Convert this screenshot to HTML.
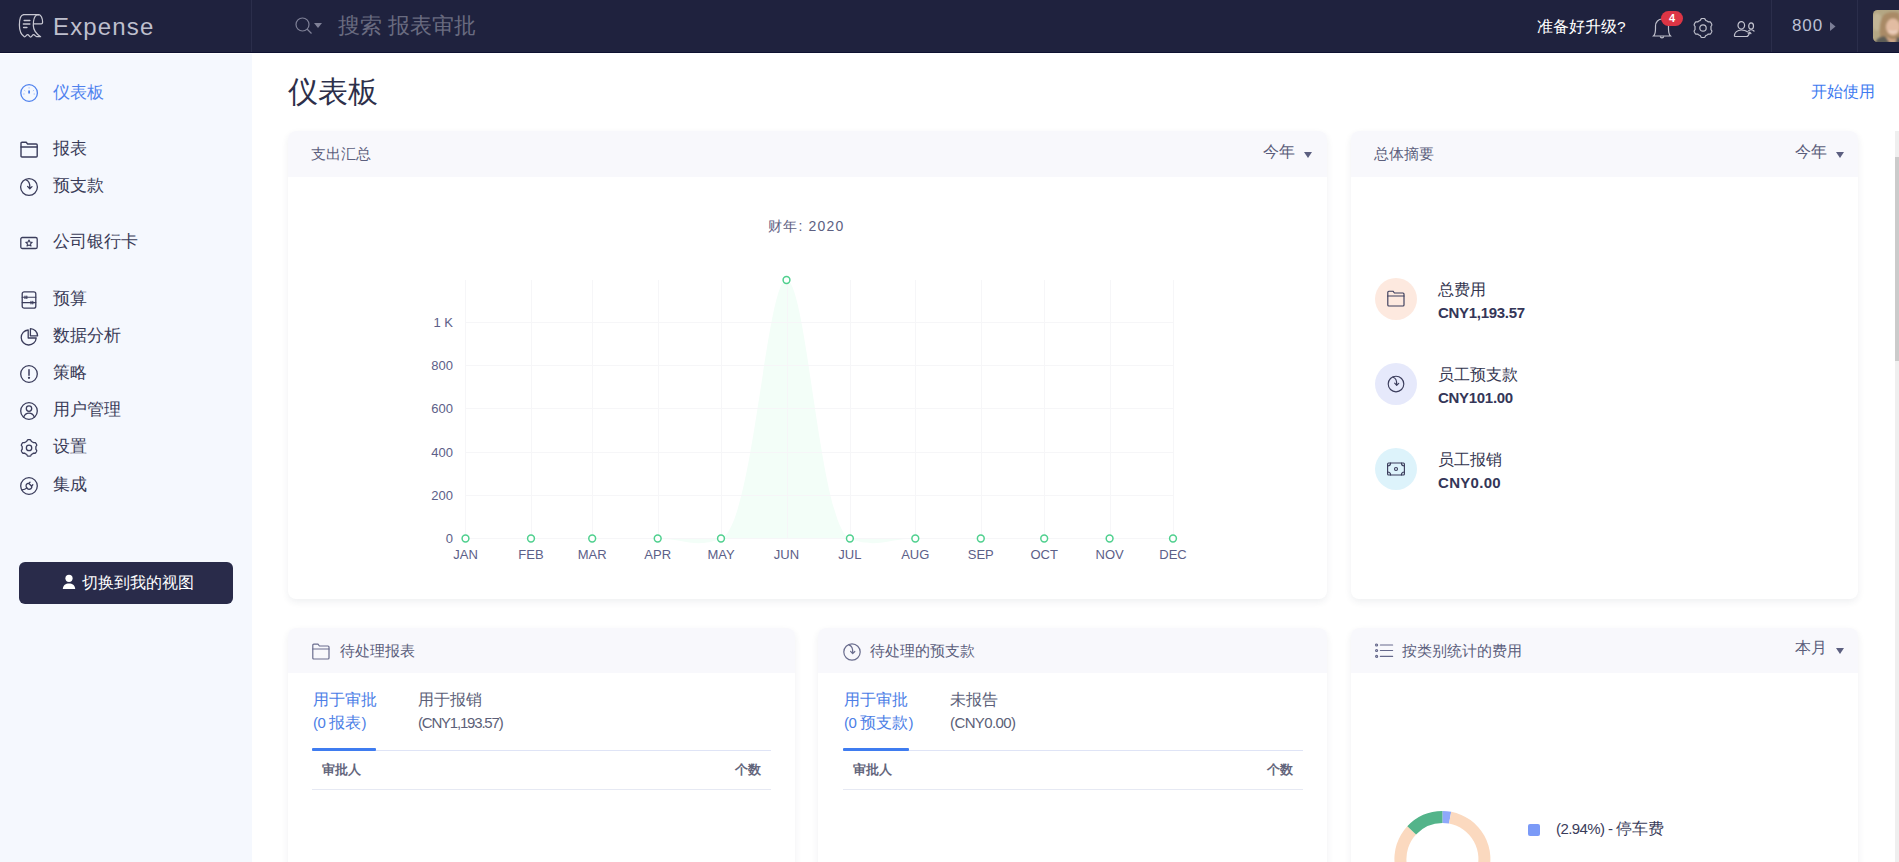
<!DOCTYPE html><html><head><meta charset="utf-8"><style>
*{box-sizing:border-box;margin:0;padding:0}
html,body{width:1899px;height:862px;overflow:hidden;background:#fff;font-family:"Liberation Sans",sans-serif;color:#2b2d42}
.a{position:absolute}
.t{position:absolute;white-space:nowrap}
.vd{position:absolute;top:0;width:1px;height:52px;background:#2b2e4b}
.nav{position:absolute;left:53px;font-size:17px;color:#3a3c58;line-height:20px;white-space:nowrap}
.card{position:absolute;background:#fff;border-radius:8px;box-shadow:0 3px 7px rgba(40,50,80,0.075)}
.ch{position:absolute;left:0;top:0;right:0;background:#f8f8fc;border-radius:8px 8px 0 0}
.ct{position:absolute;font-size:15px;color:#5c5f7d;line-height:18px;white-space:nowrap}
.dd{position:absolute;font-size:16px;color:#5a5d7a;line-height:18px;white-space:nowrap}
.tri{position:absolute;width:0;height:0;border-left:4px solid transparent;border-right:4px solid transparent;border-top:6px solid #5c5f80}
.ax{position:absolute;font-size:13px;color:#5c6088;line-height:14px;white-space:nowrap}
.tab1{position:absolute;font-size:15.5px;line-height:20px;color:#4c7ee6;white-space:nowrap}
.tab2{position:absolute;font-size:15.5px;line-height:20px;color:#5c5f78;white-space:nowrap}
.n{letter-spacing:-0.6px;font-size:15px}
.th{position:absolute;font-size:12.5px;font-weight:bold;color:#63657b;line-height:16px;white-space:nowrap}
</style></head><body>
<div class="a" style="left:0;top:0;width:1899px;height:52px;background:#1f223e"></div>
<div class="a" style="left:0;top:52px;width:1899px;height:1px;background:#0e1131"></div>
<svg class="a" style="left:0;top:0" width="50" height="50" viewBox="0 0 50 50" fill="none" stroke="#c8c8d2" stroke-width="1.25" stroke-linejoin="round" stroke-linecap="round">
<path d="M23.5 14.6 C21 14.9 19.4 18 19.4 24.9 C19.4 30 21 34.5 24.3 36.7 C25.6 37.3 26.4 34.6 27.6 34.6 C28.8 34.6 29.5 37 30.6 37 C31.7 37 32.4 34.6 33.6 34.6 C34.8 34.6 35.4 36.5 36.6 36.6 L40.6 36.7 C36 33.5 33.3 29.5 33.3 25.2 C33.3 20 34.2 16.4 36.6 15 C37.3 14.7 38 14.6 38.8 14.6 C41 14.7 42.6 18.5 42.6 22.2 C42.6 23.2 42.2 23.9 41.2 23.9 H33.6"/>
<path d="M23.5 14.6 H38.8"/>
<path d="M24.2 20.6 H29.8 M23.4 23.9 H29.8 M23.6 27.5 H26.9" stroke-width="1.5"/></svg>
<div class="t" style="left:53px;top:13px;font-size:24px;line-height:28px;color:#bebfcd;letter-spacing:1.15px">Expense</div>
<div class="vd" style="left:251px"></div>
<svg class="a" style="left:294px;top:16px" width="30" height="20" viewBox="0 0 30 20" fill="none" stroke="#7f8197" stroke-width="1.2">
<circle cx="8.5" cy="8.5" r="6.5"/><path d="M13 13 L17.5 17.5"/><path d="M20 7 H28 L24 12 Z" fill="#7f8197" stroke="none"/></svg>
<div class="t" style="left:338px;top:13px;font-size:22px;color:#696b80;line-height:26px">搜索 报表审批</div>
<div class="t" style="left:1537px;top:17px;font-size:15.5px;color:#fff;line-height:20px">准备好升级?</div>
<svg class="a" style="left:1651px;top:16px" width="23" height="23" viewBox="0 0 23 23" fill="none" stroke="#bfc0cc" stroke-width="1.2">
<path d="M2.5 20 C4 18.5 4.5 17 4.5 13 V10 C4.5 6 7.5 3 11 3 C14.5 3 17.5 6 17.5 10 V13 C17.5 17 18 18.5 19.5 20 Z"/><path d="M9.2 20.3 C9.6 22.3 12.4 22.3 12.8 20.3"/></svg>
<div class="a" style="left:1661px;top:11px;width:22px;height:15px;border-radius:8px;background:#dc3545;color:#fff;font-size:11px;font-weight:bold;text-align:center;line-height:15px">4</div>
<svg class="a" style="left:1692px;top:17px" width="22" height="22" viewBox="0 0 22 22" fill="none" stroke="#bfc0cc" stroke-width="1.2" stroke-linejoin="round"><path d="M11.00 1.50 L11.62 1.52 L12.24 1.60 L12.83 1.81 L13.26 2.55 L13.61 3.30 L14.07 3.59 L14.54 3.82 L15.00 4.07 L15.45 4.35 L15.88 4.64 L16.36 4.88 L17.19 4.81 L18.04 4.82 L18.52 5.23 L18.90 5.72 L19.23 6.25 L19.52 6.80 L19.76 7.37 L19.87 7.99 L19.45 8.74 L18.98 9.41 L18.95 9.95 L18.99 10.48 L19.00 11.00 L18.99 11.52 L18.95 12.05 L18.98 12.59 L19.45 13.26 L19.87 14.01 L19.76 14.63 L19.52 15.20 L19.23 15.75 L18.90 16.28 L18.52 16.77 L18.04 17.18 L17.19 17.19 L16.36 17.12 L15.88 17.36 L15.45 17.65 L15.00 17.93 L14.54 18.18 L14.07 18.41 L13.61 18.70 L13.26 19.45 L12.83 20.19 L12.24 20.40 L11.62 20.48 L11.00 20.50 L10.38 20.48 L9.76 20.40 L9.17 20.19 L8.74 19.45 L8.39 18.70 L7.93 18.41 L7.46 18.18 L7.00 17.93 L6.55 17.65 L6.12 17.36 L5.64 17.12 L4.81 17.19 L3.96 17.18 L3.48 16.77 L3.10 16.28 L2.77 15.75 L2.48 15.20 L2.24 14.63 L2.13 14.01 L2.55 13.26 L3.02 12.59 L3.05 12.05 L3.01 11.52 L3.00 11.00 L3.01 10.48 L3.05 9.95 L3.02 9.41 L2.55 8.74 L2.13 7.99 L2.24 7.37 L2.48 6.80 L2.77 6.25 L3.10 5.72 L3.48 5.23 L3.96 4.82 L4.81 4.81 L5.64 4.88 L6.12 4.64 L6.55 4.35 L7.00 4.07 L7.46 3.82 L7.93 3.59 L8.39 3.30 L8.74 2.55 L9.17 1.81 L9.76 1.60 L10.38 1.52Z"/><circle cx="11" cy="11" r="3.2"/></svg>
<svg class="a" style="left:1733px;top:20px" width="23" height="19" viewBox="0 0 23 19" fill="none" stroke="#c3c4cf" stroke-width="1.2" stroke-linecap="round" stroke-linejoin="round">
<ellipse cx="8.3" cy="5.35" rx="3.3" ry="3.7"/><path d="M14.4 11.8 C13 10.6 11 10 8.3 10 C4.3 10 1.6 12.6 1.4 15.4 C1.3 16.1 1.8 16.5 2.6 16.5 H13.5 C14.8 16.5 15.8 15.4 16.5 12.8"/><path d="M15.2 13.4 L16.6 12.1 L17.9 13.5"/>
<ellipse cx="18.1" cy="6" rx="2.4" ry="3.1"/><path d="M15.4 10.9 C16.8 9.7 19.5 9.7 21 11"/></svg>
<div class="vd" style="left:1771px"></div>
<div class="t" style="left:1792px;top:16px;font-size:17px;color:#bcc0d4;line-height:20px;letter-spacing:0.9px">800</div>
<svg class="a" style="left:1830px;top:22px" width="6" height="9"><path d="M0 0 L5.5 4.5 L0 9 Z" fill="#7b7e96"/></svg>
<div class="vd" style="left:1857px"></div>
<svg class="a" style="left:1873px;top:10px" width="26" height="32" viewBox="0 0 26 32">
<defs><clipPath id="av"><rect x="0" y="0" width="34" height="32" rx="4.5"/></clipPath><filter id="bl"><feGaussianBlur stdDeviation="0.8"/></filter></defs>
<g clip-path="url(#av)"><rect width="34" height="32" fill="#b4a784"/>
<g filter="url(#bl)">
<ellipse cx="4" cy="12" rx="5" ry="9" fill="#c2b596"/>
<path d="M8 30 C6 22 6 12 10 6 C13 2 20 1 26 3 L30 30 Z" fill="#a98a66"/>
<ellipse cx="20" cy="17" rx="7" ry="8.5" fill="#e2bca2"/>
<path d="M14 27 C17 30 22 30 26 28 L26 32 L14 32 Z" fill="#d3a98a"/>
<path d="M2 34 C3 29 6 27 11 26 C14 28 16 32 18 34 Z" fill="#5d5d57"/>
<path d="M24 27 C26 27 28 28 30 30 L30 34 L22 34 Z" fill="#5d5d57"/>
<path d="M16 21 C18 22.5 22 22.5 24 21" stroke="#fff" stroke-width="1" fill="none" opacity="0.7"/>
</g></g></svg>
<div class="a" style="left:0;top:54px;width:252px;height:808px;background:#f5f8fe"></div>
<svg class="a" style="left:19px;top:83px" width="20" height="20" viewBox="0 0 20 20" fill="none" stroke="#4f82ee" stroke-width="1.3" stroke-linejoin="round" stroke-linecap="round"><circle cx="10.1" cy="10" r="8.3"/><path d="M10.1 7.4 V10.4" stroke-width="1.8" stroke-linecap="butt"/><path d="M10.1 4.6 V5.1 M5.6 7.5 L6 7.8 M14.6 7.5 L14.2 7.8 M4.6 11 H5.2 M15 11 H15.6" stroke-width="0.9" opacity="0.55"/></svg>
<div class="nav" style="top:83px;color:#4f82ee">仪表板</div>
<svg class="a" style="left:19px;top:140px" width="20" height="18" viewBox="0 0 20 18" fill="none" stroke="#3b3d5c" stroke-width="1.4" stroke-linejoin="round" stroke-linecap="round"><path d="M2 3.2 C2 2.6 2.4 2.2 3 2.2 H7.2 L8.6 4 H17.2 C17.8 4 18.2 4.4 18.2 5 V16 C18.2 16.6 17.8 17 17.2 17 H3 C2.4 17 2 16.6 2 16 Z"/><path d="M2 7 H18.2"/></svg>
<div class="nav" style="top:139px">报表</div>
<svg class="a" style="left:19px;top:177px" width="20" height="20" viewBox="0 0 20 20" fill="none" stroke="#3b3d5c" stroke-width="1.3" stroke-linejoin="round" stroke-linecap="round"><circle cx="10" cy="10" r="8.4"/><path d="M6.6 2.6 C9.6 3.4 11.2 6.4 10.8 11.6 M8.6 9.4 L10.8 11.8 L13 9.6"/></svg>
<div class="nav" style="top:176px">预支款</div>
<svg class="a" style="left:19px;top:235px" width="20" height="16" viewBox="0 0 20 16" fill="none" stroke="#3b3d5c" stroke-width="1.3" stroke-linejoin="round" stroke-linecap="round"><rect x="1.8" y="2.5" width="16.4" height="11" rx="1.6"/><path d="M10 5 L11 7.1 L13.2 7.3 L11.5 8.8 L12 11 L10 9.9 L8 11 L8.5 8.8 L6.8 7.3 L9 7.1 Z" stroke-width="1.1"/></svg>
<div class="nav" style="top:232px">公司银行卡</div>
<svg class="a" style="left:19px;top:290px" width="20" height="20" viewBox="0 0 20 20" fill="none" stroke="#3b3d5c" stroke-width="1.3" stroke-linejoin="round" stroke-linecap="round"><rect x="3.2" y="1.8" width="13.6" height="16.4" rx="2"/><path d="M3.2 7.2 H16.8 M3.2 12.6 H16.8" stroke-width="1.1"/><path d="M6 6 V8.4 M7.8 6 V8.4 M12 11.4 V13.8 M13.8 11.4 V13.8" stroke-width="1.2"/></svg>
<div class="nav" style="top:289px">预算</div>
<svg class="a" style="left:19px;top:327px" width="20" height="20" viewBox="0 0 20 20" fill="none" stroke="#3b3d5c" stroke-width="1.3" stroke-linejoin="round" stroke-linecap="round"><path d="M9.2 3 A7.5 7.5 0 1 0 17.2 11 H9.2 Z"/><path d="M11.4 1.6 A7.5 7.5 0 0 1 18.6 8.8 H11.4 Z"/></svg>
<div class="nav" style="top:326px">数据分析</div>
<svg class="a" style="left:19px;top:364px" width="20" height="20" viewBox="0 0 20 20" fill="none" stroke="#3b3d5c" stroke-width="1.3" stroke-linejoin="round" stroke-linecap="round"><circle cx="10" cy="10" r="8.3"/><path d="M10 5.8 V11.3" stroke-width="1.5"/><circle cx="10" cy="13.8" r="0.5" fill="#3b3d5c"/></svg>
<div class="nav" style="top:363px">策略</div>
<svg class="a" style="left:19px;top:401px" width="20" height="20" viewBox="0 0 20 20" fill="none" stroke="#3b3d5c" stroke-width="1.3" stroke-linejoin="round" stroke-linecap="round"><circle cx="10" cy="10" r="8.3"/><circle cx="10" cy="7.6" r="2.7"/><path d="M4.6 16.2 C5.8 13.2 7.6 12.2 10 12.2 C12.4 12.2 14.2 13.2 15.4 16.2"/></svg>
<div class="nav" style="top:400px">用户管理</div>
<svg class="a" style="left:19px;top:438px" width="20" height="20" viewBox="0 0 20 20" fill="none" stroke="#3b3d5c" stroke-width="1.3" stroke-linejoin="round" stroke-linecap="round"><path d="M10.05 1.65 L10.59 1.67 L11.12 1.74 L11.64 1.93 L12.00 2.61 L12.29 3.29 L12.68 3.56 L13.08 3.75 L13.47 3.97 L13.86 4.20 L14.23 4.45 L14.65 4.66 L15.39 4.56 L16.16 4.54 L16.58 4.89 L16.91 5.32 L17.19 5.77 L17.45 6.25 L17.66 6.75 L17.74 7.29 L17.34 7.95 L16.89 8.54 L16.86 9.00 L16.89 9.45 L16.90 9.90 L16.89 10.35 L16.86 10.80 L16.89 11.26 L17.34 11.85 L17.74 12.51 L17.66 13.05 L17.45 13.55 L17.19 14.02 L16.91 14.48 L16.58 14.91 L16.16 15.26 L15.39 15.24 L14.65 15.14 L14.23 15.35 L13.86 15.60 L13.47 15.83 L13.08 16.05 L12.68 16.24 L12.29 16.51 L12.00 17.19 L11.64 17.87 L11.12 18.06 L10.59 18.13 L10.05 18.15 L9.51 18.13 L8.98 18.06 L8.46 17.87 L8.10 17.19 L7.81 16.51 L7.42 16.24 L7.02 16.05 L6.63 15.83 L6.24 15.60 L5.87 15.35 L5.45 15.14 L4.71 15.24 L3.94 15.26 L3.52 14.91 L3.19 14.48 L2.91 14.03 L2.65 13.55 L2.44 13.05 L2.36 12.51 L2.76 11.85 L3.21 11.26 L3.24 10.80 L3.21 10.35 L3.20 9.90 L3.21 9.45 L3.24 9.00 L3.21 8.54 L2.76 7.95 L2.36 7.29 L2.44 6.75 L2.65 6.25 L2.91 5.77 L3.19 5.32 L3.52 4.89 L3.94 4.54 L4.71 4.56 L5.45 4.66 L5.87 4.45 L6.24 4.20 L6.62 3.97 L7.02 3.75 L7.42 3.56 L7.81 3.29 L8.10 2.61 L8.46 1.93 L8.98 1.74 L9.51 1.67Z"/><circle cx="10.05" cy="9.9" r="2.7"/></svg>
<div class="nav" style="top:437px">设置</div>
<svg class="a" style="left:19px;top:476px" width="20" height="20" viewBox="0 0 20 20" fill="none" stroke="#3b3d5c" stroke-width="1.3" stroke-linejoin="round" stroke-linecap="round"><circle cx="10" cy="10" r="8.3"/><path d="M2.6 13.8 C5 13.9 6.6 13.2 7.9 11.9"/><path d="M7.6 8.2 C8.6 7.2 9.6 7.2 10.4 8 L12.2 9.8 C13 10.6 13 11.6 12 12.6 C10.6 13.6 9 13.2 8 12.2 C7 11.2 6.8 9.2 7.6 8.2 Z"/><path d="M9.8 7.4 L11 6.2 M12.6 10 L13.8 8.8"/></svg>
<div class="nav" style="top:475px">集成</div>
<div class="a" style="left:19px;top:562px;width:214px;height:42px;border-radius:6px;background:#292b4a"></div>
<svg class="a" style="left:62px;top:574px" width="14" height="16" viewBox="0 0 14 16"><circle cx="7" cy="4.3" r="3.6" fill="#fff"/><path d="M0.8 15 C1.2 11.2 3.5 9.6 7 9.6 C10.5 9.6 12.8 11.2 13.2 15 Z" fill="#fff"/></svg>
<div class="t" style="left:82px;top:573px;font-size:16px;line-height:20px;color:#fff">切换到我的视图</div>
<div class="t" style="left:288px;top:73px;font-size:30px;line-height:38px;color:#2d2f4a">仪表板</div>
<div class="t" style="left:1811px;top:82px;font-size:16px;line-height:20px;color:#3f7cf0">开始使用</div>
<div class="card" style="left:288px;top:131px;width:1039px;height:468px"><div class="ch" style="height:46px"></div></div>
<div class="ct" style="left:311px;top:145px">支出汇总</div>
<div class="dd" style="left:1263px;top:143px">今年</div><div class="tri" style="left:1304px;top:152px"></div>
<div class="t" style="left:768px;top:218px;font-size:14px;line-height:16px;color:#5d6082;letter-spacing:1.2px">财年: 2020</div>
<svg class="a" style="left:0;top:0" width="1899" height="862" viewBox="0 0 1899 862"><path d="M465.5 538.5 L657.7 538.5 C683 538.5 695.7 549 721 538.5 C753 528 766 280 786.5 280 C807 280 820 528 849.9 538.5 C876 549 889 538.5 915.3 538.5 L1173 538.5 Z" fill="#f3fef8"/><rect x="465" y="280" width="1" height="259" fill="#f6f6f8"/><rect x="531" y="280" width="1" height="259" fill="#f6f6f8"/><rect x="592" y="280" width="1" height="259" fill="#f6f6f8"/><rect x="658" y="280" width="1" height="259" fill="#f6f6f8"/><rect x="721" y="280" width="1" height="259" fill="#f6f6f8"/><rect x="787" y="280" width="1" height="259" fill="#f6f6f8"/><rect x="850" y="280" width="1" height="259" fill="#f6f6f8"/><rect x="915" y="280" width="1" height="259" fill="#f6f6f8"/><rect x="981" y="280" width="1" height="259" fill="#f6f6f8"/><rect x="1044" y="280" width="1" height="259" fill="#f6f6f8"/><rect x="1110" y="280" width="1" height="259" fill="#f6f6f8"/><rect x="1173" y="280" width="1" height="259" fill="#f6f6f8"/><rect x="465" y="538" width="708" height="1" fill="#f6f6f8"/><rect x="465" y="495" width="708" height="1" fill="#f6f6f8"/><rect x="465" y="452" width="708" height="1" fill="#f6f6f8"/><rect x="465" y="408" width="708" height="1" fill="#f6f6f8"/><rect x="465" y="365" width="708" height="1" fill="#f6f6f8"/><rect x="465" y="322" width="708" height="1" fill="#f6f6f8"/><circle cx="465.5" cy="538.5" r="3.4" fill="#fff" stroke="#4fd08e" stroke-width="1.5"/><circle cx="531.0" cy="538.5" r="3.4" fill="#fff" stroke="#4fd08e" stroke-width="1.5"/><circle cx="592.2" cy="538.5" r="3.4" fill="#fff" stroke="#4fd08e" stroke-width="1.5"/><circle cx="657.7" cy="538.5" r="3.4" fill="#fff" stroke="#4fd08e" stroke-width="1.5"/><circle cx="721.0" cy="538.5" r="3.4" fill="#fff" stroke="#4fd08e" stroke-width="1.5"/><circle cx="786.5" cy="280.0" r="3.4" fill="#fff" stroke="#4fd08e" stroke-width="1.5"/><circle cx="849.9" cy="538.5" r="3.4" fill="#fff" stroke="#4fd08e" stroke-width="1.5"/><circle cx="915.3" cy="538.5" r="3.4" fill="#fff" stroke="#4fd08e" stroke-width="1.5"/><circle cx="980.8" cy="538.5" r="3.4" fill="#fff" stroke="#4fd08e" stroke-width="1.5"/><circle cx="1044.2" cy="538.5" r="3.4" fill="#fff" stroke="#4fd08e" stroke-width="1.5"/><circle cx="1109.6" cy="538.5" r="3.4" fill="#fff" stroke="#4fd08e" stroke-width="1.5"/><circle cx="1173.0" cy="538.5" r="3.4" fill="#fff" stroke="#4fd08e" stroke-width="1.5"/></svg>
<div class="ax" style="left:353px;width:100px;text-align:right;top:532px">0</div>
<div class="ax" style="left:353px;width:100px;text-align:right;top:489px">200</div>
<div class="ax" style="left:353px;width:100px;text-align:right;top:446px">400</div>
<div class="ax" style="left:353px;width:100px;text-align:right;top:402px">600</div>
<div class="ax" style="left:353px;width:100px;text-align:right;top:359px">800</div>
<div class="ax" style="left:353px;width:100px;text-align:right;top:316px">1 K</div>
<div class="ax" style="left:435.5px;width:60px;text-align:center;top:548px">JAN</div>
<div class="ax" style="left:501.0px;width:60px;text-align:center;top:548px">FEB</div>
<div class="ax" style="left:562.2px;width:60px;text-align:center;top:548px">MAR</div>
<div class="ax" style="left:627.7px;width:60px;text-align:center;top:548px">APR</div>
<div class="ax" style="left:691.0px;width:60px;text-align:center;top:548px">MAY</div>
<div class="ax" style="left:756.5px;width:60px;text-align:center;top:548px">JUN</div>
<div class="ax" style="left:819.9px;width:60px;text-align:center;top:548px">JUL</div>
<div class="ax" style="left:885.3px;width:60px;text-align:center;top:548px">AUG</div>
<div class="ax" style="left:950.8px;width:60px;text-align:center;top:548px">SEP</div>
<div class="ax" style="left:1014.2px;width:60px;text-align:center;top:548px">OCT</div>
<div class="ax" style="left:1079.6px;width:60px;text-align:center;top:548px">NOV</div>
<div class="ax" style="left:1143.0px;width:60px;text-align:center;top:548px">DEC</div>
<div class="card" style="left:1351px;top:131px;width:507px;height:468px"><div class="ch" style="height:46px"></div></div>
<div class="ct" style="left:1374px;top:145px">总体摘要</div>
<div class="dd" style="left:1795px;top:143px">今年</div><div class="tri" style="left:1836px;top:152px"></div>
<div class="a" style="left:1375px;top:278px;width:42px;height:42px;border-radius:21px;background:#fde9df"></div>
<svg class="a" style="left:1386px;top:289px" width="20" height="20" viewBox="0 0 20 20" fill="none" stroke="#3b3d5c" stroke-width="1.15" stroke-linejoin="round" stroke-linecap="round"><path d="M1.8 3.2 C1.8 2.6 2.2 2.2 2.8 2.2 H7 L8.4 4 H17 C17.6 4 18 4.4 18 5 V16 C18 16.6 17.6 17 17 17 H2.8 C2.2 17 1.8 16.6 1.8 16 Z"/><path d="M1.8 7 H18"/></svg>
<div class="t" style="left:1438px;top:280px;font-size:16px;line-height:20px;color:#34364f">总费用</div>
<div class="t" style="left:1438px;top:304px;font-size:15px;line-height:18px;font-weight:bold;color:#343658;letter-spacing:-0.3px">CNY1,193.57</div>
<div class="a" style="left:1375px;top:363px;width:42px;height:42px;border-radius:21px;background:#e6e9fb"></div>
<svg class="a" style="left:1386px;top:374px" width="20" height="20" viewBox="0 0 20 20" fill="none" stroke="#3b3d5c" stroke-width="1.15" stroke-linejoin="round" stroke-linecap="round"><circle cx="10" cy="10" r="7.8"/><path d="M7 3.2 C9.6 3.9 11 6.6 10.7 11.2 M8.7 9.2 L10.7 11.4 L12.7 9.4"/></svg>
<div class="t" style="left:1438px;top:365px;font-size:16px;line-height:20px;color:#34364f">员工预支款</div>
<div class="t" style="left:1438px;top:389px;font-size:15px;line-height:18px;font-weight:bold;color:#343658;letter-spacing:-0.3px">CNY101.00</div>
<div class="a" style="left:1375px;top:448px;width:42px;height:42px;border-radius:21px;background:#ddf3fb"></div>
<svg class="a" style="left:1386px;top:459px" width="20" height="20" viewBox="0 0 20 20" fill="none" stroke="#3b3d5c" stroke-width="1.15" stroke-linejoin="round" stroke-linecap="round"><rect x="1.6" y="4" width="16.8" height="12" rx="1"/><circle cx="10" cy="10" r="1.5"/><path d="M1.6 7 C3.4 7 4.6 5.8 4.6 4 M15.4 4 C15.4 5.8 16.6 7 18.4 7 M1.6 13 C3.4 13 4.6 14.2 4.6 16 M15.4 16 C15.4 14.2 16.6 13 18.4 13"/></svg>
<div class="t" style="left:1438px;top:450px;font-size:16px;line-height:20px;color:#34364f">员工报销</div>
<div class="t" style="left:1438px;top:474px;font-size:15px;line-height:18px;font-weight:bold;color:#343658;letter-spacing:-0.3px"><span style="letter-spacing:0.3px">CNY0.00</span></div>
<div class="card" style="left:288px;top:628px;width:507px;height:260px"><div class="ch" style="height:45px"></div></div>
<svg class="a" style="left:311px;top:642px" width="20" height="20" viewBox="0 0 20 20" fill="none" stroke="#6a6d8e" stroke-width="1.2" stroke-linejoin="round" stroke-linecap="round"><path d="M1.8 3.2 C1.8 2.6 2.2 2.2 2.8 2.2 H7 L8.4 4 H17 C17.6 4 18 4.4 18 5 V16 C18 16.6 17.6 17 17 17 H2.8 C2.2 17 1.8 16.6 1.8 16 Z"/><path d="M1.8 7 H18"/></svg>
<div class="ct" style="left:340px;top:642px">待处理报表</div>
<div class="tab1" style="left:313px;top:690px">用于审批</div>
<div class="tab1" style="left:313px;top:713px"><span class="n">(0</span> 报表<span class="n">)</span></div>
<div class="tab2" style="left:418px;top:690px">用于报销</div>
<div class="tab2" style="left:418px;top:713px"><span class="n" style="letter-spacing:-1.2px">(CNY1,193.57)</span></div>
<div class="a" style="left:312px;top:750px;width:459px;height:1px;background:#dfe4f6"></div>
<div class="a" style="left:312px;top:748px;width:64px;height:3px;border-radius:1px;background:#3f7cf0"></div>
<div class="th" style="left:322px;top:762px">审批人</div>
<div class="th" style="left:701px;width:60px;text-align:right;top:762px">个数</div>
<div class="a" style="left:312px;top:789px;width:459px;height:1px;background:#e6e9f3"></div>
<div class="card" style="left:818px;top:628px;width:509px;height:260px"><div class="ch" style="height:45px"></div></div>
<svg class="a" style="left:842px;top:642px" width="20" height="20" viewBox="0 0 20 20" fill="none" stroke="#6a6d8e" stroke-width="1.2" stroke-linejoin="round" stroke-linecap="round"><circle cx="10" cy="10" r="8.2"/><path d="M6.8 2.8 C9.6 3.6 11.1 6.5 10.7 11.4 M8.6 9.3 L10.7 11.6 L12.8 9.5"/></svg>
<div class="ct" style="left:870px;top:642px">待处理的预支款</div>
<div class="tab1" style="left:844px;top:690px">用于审批</div>
<div class="tab1" style="left:844px;top:713px"><span class="n">(0</span> 预支款<span class="n">)</span></div>
<div class="tab2" style="left:950px;top:690px">未报告</div>
<div class="tab2" style="left:950px;top:713px"><span class="n">(CNY0.00)</span></div>
<div class="a" style="left:843px;top:750px;width:460px;height:1px;background:#dfe4f6"></div>
<div class="a" style="left:843px;top:748px;width:66px;height:3px;border-radius:1px;background:#3f7cf0"></div>
<div class="th" style="left:853px;top:762px">审批人</div>
<div class="th" style="left:1233px;width:60px;text-align:right;top:762px">个数</div>
<div class="a" style="left:843px;top:789px;width:460px;height:1px;background:#e6e9f3"></div>
<div class="card" style="left:1351px;top:628px;width:507px;height:260px"><div class="ch" style="height:45px"></div></div>
<svg class="a" style="left:1375px;top:643px" width="20" height="16" viewBox="0 0 20 16" fill="none" stroke="#66698c" stroke-width="1.2" stroke-linecap="round"><circle cx="1.6" cy="2" r="1"/><circle cx="1.6" cy="7.5" r="1"/><circle cx="1.6" cy="13.4" r="1"/><path d="M5.4 2 H17.6 M5.4 7.5 H17.6 M5.4 13.4 H17.6"/></svg>
<div class="ct" style="left:1402px;top:642px">按类别统计的费用</div>
<div class="dd" style="left:1795px;top:639px">本月</div><div class="tri" style="left:1836px;top:648px"></div>
<svg class="a" style="left:0;top:0" width="1899" height="862" viewBox="0 0 1899 862"><path d="M1442.40 811.00 A48 48 0 0 1 1451.23 811.82 L1449.02 823.61 A36 36 0 0 0 1442.40 823.00 Z" fill="#8ea8fa"/><path d="M1451.23 811.82 A48 48 0 1 1 1407.30 826.26 L1416.07 834.45 A36 36 0 1 0 1449.02 823.61 Z" fill="#fbd9bf"/><path d="M1407.30 826.26 A48 48 0 0 1 1442.40 811.00 L1442.40 823.00 A36 36 0 0 0 1416.07 834.45 Z" fill="#53b48a"/></svg>
<div class="a" style="left:1528px;top:824px;width:12px;height:12px;border-radius:2px;background:#7b9af7"></div>
<div class="t" style="left:1556px;top:819px;font-size:16px;line-height:20px;color:#3a3c5a"><span class="n">(2.94%) - </span>停车费</div>
<div class="a" style="left:1895px;top:131px;width:4px;height:731px;background:#efefef"></div>
<div class="a" style="left:1895px;top:157px;width:4px;height:204px;background:#cbcbcb"></div>
</body></html>
